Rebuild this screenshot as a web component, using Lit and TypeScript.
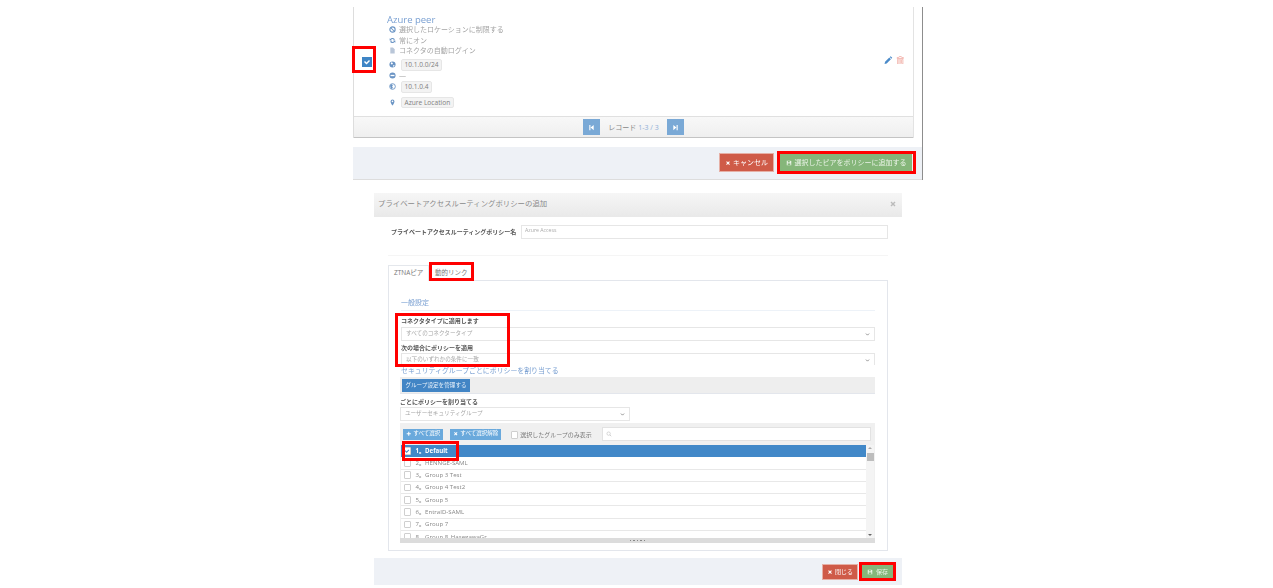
import { LitElement, html, css, svg } from "lit";
import { customElement } from "lit/decorators.js";

const icons: Record<string, unknown> = {
  ban: svg`<circle cx="8" cy="8" r="6" fill="none" stroke="currentColor" stroke-width="2.6"/><path d="M4 4l8 8" stroke="currentColor" stroke-width="2.4"/>`,
  refresh: svg`<path d="M13.5 6A6 6 0 0 0 3 4.5L1.5 3v5h5L4.8 6.2A3.8 3.8 0 0 1 11 6.6zM2.5 10A6 6 0 0 0 13 11.5l1.5 1.500v-5h-5l1.700 1.800A3.800 3.800 0 0 1 5 9.400z" fill="currentColor"/>`,
  file: svg`<path d="M3 1h6l4 4v10H3z" fill="currentColor"/>`,
  globe: svg`<circle cx="8" cy="8" r="7" fill="currentColor"/><path d="M5 3l3 1 1 3-3 1-2-2zM10 9l3 1-2 3-2-1z" fill="#fff"/>`,
  minus: svg`<circle cx="8" cy="8" r="7" fill="currentColor"/><rect x="3.500" y="6.500" width="9" height="3" fill="#fff"/>`,
  globe2: svg`<circle cx="8" cy="8" r="6.500" fill="none" stroke="currentColor" stroke-width="2"/><path d="M2 6l4-4 3 3-2 3 2 3-3 3z" fill="currentColor"/>`,
  marker: svg`<path d="M8 1a4.500 4.500 0 0 0-4.500 4.500C3.500 9 8 15 8 15s4.500-6 4.500-9.500A4.500 4.500 0 0 0 8 1z" fill="currentColor"/><circle cx="8" cy="5.500" r="1.800" fill="#fff"/>`,
  pencil: svg`<path d="M1 15l1-4 8-8 3 3-8 8zM11 2l1.500-1.500 3 3L14 5z" fill="currentColor"/>`,
  trash: svg`<path d="M6 1h4l1 2h3v1.500H2V3h3zM3 6h10v9H3zM5.500 7.500v6M8 7.500v6M10.500 7.500v6" fill="none" stroke="currentColor" stroke-width="1.400"/>`,
  save: svg`<path d="M2 2h10l2 2v10H2z" fill="currentColor"/><rect x="5" y="2.800" width="5" height="3.500" fill="#85b67a"/><rect x="4.500" y="9" width="7" height="4.500" fill="#85b67a"/>`,
  times: svg`<path d="M3 5l2-2 3 3 3-3 2 2-3 3 3 3-2 2-3-3-3 3-2-2 3-3z" fill="currentColor"/>`,
  plus: svg`<path d="M6.500 2h3v4.500H14v3H9.500V14h-3V9.500H2v-3h4.500z" fill="currentColor"/>`,
  first: svg`<path d="M3 2h2.500v12H3zM13 2v12L6 8z" fill="currentColor"/>`,
  last: svg`<path d="M13 2h-2.500v12H13zM3 2v12l7-6z" fill="currentColor"/>`,
  check: svg`<path d="M2 8l2-2 3 3 5-5 2 2-7 7z" fill="currentColor"/>`,
  search: svg`<circle cx="7" cy="7" r="4.500" fill="none" stroke="currentColor" stroke-width="1.500"/><path d="M10.500 10.500L14 14" stroke="currentColor" stroke-width="1.800"/>`,
  chev: svg`<path d="M3 5l5 5 5-5" fill="none" stroke="currentColor" stroke-width="2.500"/>`,
};

const ic = (name: string, cls = "") =>
  html`<svg class="ic ${cls}" viewBox="0 0 16 16" aria-hidden="true">${icons[name]}</svg>`;

const groups = [
  "2。HENNGE-SAML",
  "3。Group 3 Test",
  "4。Group 4 Test2",
  "5。Group 5",
  "6。EntraID-SAML",
  "7。Group 7",
  "8。Group 8_HasegawaGr",
];

@customElement("app-root")
export class AppRoot extends LitElement {
  static styles = css`
    :host {
      display: block;
      width: 1273px;
      height: 588px;
      overflow: hidden;
      background: #fff;
      color: #777;
      font-family: "Open Sans", "Noto Sans CJK JP", sans-serif;
      font-size: 7px;
      line-height: 1;
    }
    * { box-sizing: border-box; }
    .page { filter: blur(0.45px); height: 588px; padding-top: 7px; }
    .ic { width: 1em; height: 1em; display: block; flex: none; }
    .hl { position: absolute; border: 3px solid #f00; pointer-events: none; z-index: 2; }

    /* upper capture */
    .upper { width: 570px; margin-left: 353px; height: 173px; border-right: 1px solid #8d8d8d; }
    .table { width: 561px; height: 131px; border-left: 1px solid #ddd; border-right: 1px solid #e3e3e3; display: flex; flex-direction: column; }
    .peer { height: 109px; display: flex; align-items: center; }
    .pick { width: 33px; padding-left: 7.700px; flex: none; }
    .bigcheck { position: relative; width: 10px; height: 10px; background: #3f85c5; color: #fff; font-size: 8px; display: flex; align-items: center; justify-content: center; }
    .hl-check { left: -9.700px; top: -10.500px; width: 24px; height: 26.700px; }
    .peer-body { flex: 1; display: flex; flex-direction: column; align-self: flex-start; }
    .peer-title { color: #7aa0d2; font-size: 9.500px; height: 11px; margin-top: 6.500px; line-height: 11px; margin-bottom: 0.300px; }
    .pline { display: flex; align-items: center; gap: 3.500px; height: 10.400px; color: #a4a4a4; font-size: 7px; padding-left: 1.500px; white-space: nowrap; }
    .pline .ic { color: #6a94c4; font-size: 7px; }
    .pline.file .ic { color: #b9c6d8; }
    .pline.chip-line { height: 11.500px; gap: 5.500px; }
    .pline.c1 { margin-top: 3.200px; }
    .pline.dash { height: 10px; }
    .pline.c2 { margin-top: 0.500px; }
    .pline.c3 { margin-top: 4px; }
    .chip { background: #f3f3f3; border: 1px solid #e6e6e6; border-radius: 2px; color: #808080; font-size: 6.600px; padding: 0 2.500px; height: 11.500px; line-height: 9.500px; white-space: nowrap; }
    .actions { display: flex; gap: 2.700px; padding-right: 9px; position: relative; top: -1.500px; font-size: 8.500px; }
    .actions .edit { color: #4a8ac9; }
    .actions .del { color: #f0a8a0; }
    .pager { height: 22px; background: linear-gradient(#f8f8f8, #efefef); border-top: 1px solid #e0e0e0; border-bottom: 1px solid #c4c4c4; display: flex; align-items: center; justify-content: center; gap: 8px; font-size: 7px; color: #888; white-space: nowrap; }
    .pager b { font-weight: 400; color: #8fb0d8; }
    .pgbtn { width: 17px; height: 16px; background: #7aa9d6; color: #fff; font-size: 7px; display: flex; align-items: center; justify-content: center; }
    .foot { margin-top: 9px; height: 33px; background: #eef1f6; border-bottom: 1px solid #ddd; display: flex; align-items: center; justify-content: flex-end; gap: 6px; padding-right: 10px; padding-bottom: 1px; }
    .btn { position: relative; display: flex; align-items: center; justify-content: center; gap: 2px; color: #fff; font-size: 7px; white-space: nowrap; }
    .btn .ic { font-size: 6px; }
    .red { background: #cf5b48; border: 1px solid #e6b0a6; }
    .green { background: #85b67a; }
    .cancel { width: 55px; height: 19px; }
    .add { width: 132px; height: 17px; gap: 3px; color: #eaf3e7; }
    .hl-add { left: -3px; top: -3px; width: 139px; height: 23px; }

    /* lower capture */
    .modal { width: 528px; margin: 13px 0 0 374px; height: 392px; display: flex; flex-direction: column; position: relative; }
    .mhead { height: 24px; background: linear-gradient(#f6f6f6, #e9e9e9); display: flex; align-items: center; justify-content: space-between; padding: 0 5px 2px 4px; color: #8a8a8a; font-size: 7.400px; flex: none; }
    .mhead .ic { color: #bbb; font-size: 8px; }
    .mbody { flex: 1; padding: 8px 14px 0 14px; display: flex; flex-direction: column; }
    .namerow { display: flex; align-items: center; height: 14px; }
    .namerow label { width: 133px; padding-left: 3px; font-weight: 700; color: #555; font-size: 6px; white-space: nowrap; flex: none; }
    .input { flex: 1; height: 14px; border: 1px solid #e6e6e6; padding: 0 3px 2px; color: #aaa; font-size: 5.200px; display: flex; align-items: center; }
    .divider { height: 1px; background: #f5f5f5; margin-top: 16px; flex: none; }
    .tabs { display: flex; height: 16px; margin-top: 9px; flex: none; position: relative; z-index: 1; }
    .tab { position: relative; display: flex; align-items: center; height: 16px; color: #777; font-size: 6.500px; border: 1px solid #e4e7ec; border-bottom: 0; background: #fff; white-space: nowrap; }
    .t1 { width: 41px; padding-left: 5px; }
    .t2 { width: 42px; padding-left: 4px; margin-left: 1px; border-color: transparent; }
    .hl-tab { left: -2px; top: -4px; width: 45px; height: 19px; }
    .panel { border: 1px solid #e3e6ec; height: 271px; margin-top: -1px; padding: 0 12px; display: flex; flex-direction: column; }
    .sect { color: #7aa0d2; font-size: 7px; margin-top: 17px; height: 10px; line-height: 10px; flex: none; }
    .rule { height: 1px; background: #edf2f8; margin-top: 2px; flex: none; }
    .general { height: 54px; overflow: hidden; flex: none; }
    .fl { display: block; font-weight: 700; color: #555; font-size: 6px; height: 7px; line-height: 7px; white-space: nowrap; }
    .f1 { margin-top: 7px; }
    .f2 { margin-top: 4px; }
    .select { height: 14px; border: 1px solid #e6e6e6; color: #a8a8a8; font-size: 5.600px; padding: 0 4px; display: flex; align-items: center; justify-content: space-between; background: #fff; }
    .select .ic { color: #777; font-size: 5px; }
    .s1 { margin-top: 2px; }
    .s2 { margin-top: 1px; }
    .sect2 { color: #7aa0d2; font-size: 6.900px; height: 10px; line-height: 10px; flex: none; white-space: nowrap; margin-top: 1px; }
    .gbar { height: 17px; background: #eee; border-bottom: 1px solid #e3e6ec; padding: 2px; flex: none; margin: 1px 0 0 -1px; }
    .gbtn { width: 68px; height: 13px; background: #4285c5; color: #e8f1fa; font-size: 5.600px; display: flex; align-items: center; justify-content: center; white-space: nowrap; }
    .fl2 { font-weight: 700; color: #555; font-size: 6px; height: 7px; line-height: 7px; margin: 5px 0 0 -1px; flex: none; white-space: nowrap; }
    .select.short { width: 230px; margin: 1px 0 0 -1px; flex: none; }
    .picker { margin: 2px 0 0 -1px; flex: none; width: 475px; background: #f0f0f0; position: relative; }
    .phead { height: 22px; display: flex; align-items: center; padding: 0 3px; }
    .mini { height: 11px; background: #6aa9dc; color: #fff; font-size: 5.500px; display: flex; align-items: center; justify-content: center; gap: 2px; white-space: nowrap; }
    .mini .ic { font-size: 5.500px; }
    .m1 { width: 40px; margin-right: 7px; }
    .m2 { width: 51px; margin-right: 9.700px; }
    .only { display: flex; align-items: center; gap: 2px; color: #777; font-size: 6px; white-space: nowrap; width: 91.300px; padding-top: 2px; flex: none; }
    .cb { width: 7.500px; height: 7.500px; border: 1px solid #cfcfcf; background: #fff; flex: none; border-radius: 1px; }
    .search { width: 269.500px; height: 14px; background: #fff; border: 1px solid #e2e2e2; padding: 3px; color: #bbb; font-size: 6px; flex: none; }
    .plist { display: flex; height: 93px; overflow: hidden; padding-left: 1px; }
    .rows { flex: 1; display: flex; flex-direction: column; background: #fff; overflow: hidden; }
    .row { height: 12.300px; flex: none; display: flex; align-items: center; gap: 4.500px; padding-left: 2.500px; border-bottom: 1px solid #e8e8e8; color: #888; font-size: 6.100px; white-space: nowrap; background: #fff; }
    .row.on { background: #4188c8; color: #fff; font-weight: 700; border-bottom: 0; }
    .row.on .cb { display: flex; align-items: center; justify-content: center; color: #4188c8; font-size: 6px; }
    .hl-def { left: 2px; top: 18px; width: 57px; height: 20px; }
    .sbar { width: 8px; background: #f4f4f4; display: flex; flex-direction: column; align-items: center; justify-content: space-between; padding: 2px 0; margin-right: 1px; position: relative; flex: none; }
    .thumb { position: absolute; top: 8px; left: 1px; width: 7px; height: 8px; background: #bdbdbd; }
    .arrow { width: 0; height: 0; border: 2px solid transparent; }
    .arrow.u { border-bottom-color: #aaa; border-top: 0; }
    .arrow.d { border-top-color: #666; border-bottom: 0; }
    .grip { height: 5px; background: #dcdcdc; display: flex; justify-content: center; align-items: center; gap: 2px; }
    .grip i { width: 1.500px; height: 1.500px; background: #888; display: block; }
    .mfoot { height: 27px; background: #eef1f6; display: flex; align-items: center; justify-content: flex-end; gap: 4px; padding-right: 9px; flex: none; font-size: 6px; }
    .mfoot .btn { font-size: 6px; }
    .close { width: 36px; height: 16px; }
    .savebtn { width: 31px; height: 13px; gap: 3px; color: #eaf3e7; }
    .hl-save { left: -3px; top: -3px; width: 37px; height: 19px; }
    .hl-conn { left: 21px; top: 120px; width: 115px; height: 54px; }
  `;

  render() {
    return html`<div class="page">
      <section class="upper">
        <div class="table">
          <div class="peer">
            <div class="pick">
              <span class="bigcheck">${ic("check")}<span class="hl hl-check"></span></span>
            </div>
            <div class="peer-body">
              <div class="peer-title">Azure peer</div>
              <div class="pline">${ic("ban")}<span>選択したロケーションに制限する</span></div>
              <div class="pline">${ic("refresh")}<span>常にオン</span></div>
              <div class="pline file">${ic("file")}<span>コネクタの自動ログイン</span></div>
              <div class="pline chip-line c1">${ic("globe")}<span class="chip">10.1.0.0/24</span></div>
              <div class="pline dash">${ic("minus")}<span>—</span></div>
              <div class="pline chip-line c2">${ic("globe2")}<span class="chip">10.1.0.4</span></div>
              <div class="pline chip-line c3">${ic("marker")}<span class="chip">Azure Location</span></div>
            </div>
            <div class="actions">
              <span class="edit">${ic("pencil")}</span><span class="del">${ic("trash")}</span>
            </div>
          </div>
          <div class="pager">
            <span class="pgbtn">${ic("first")}</span>
            <span>レコード <b>1-3 / 3</b></span>
            <span class="pgbtn">${ic("last")}</span>
          </div>
        </div>
        <div class="foot">
          <span class="btn red cancel">${ic("times")}キャンセル</span>
          <span class="btn green add">${ic("save")}選択したピアをポリシーに追加する<span class="hl hl-add"></span></span>
        </div>
      </section>

      <section class="modal">
        <header class="mhead"><span>プライベートアクセスルーティングポリシーの追加</span>${ic("times")}</header>
        <div class="mbody">
          <div class="namerow">
            <label>プライベートアクセスルーティングポリシー名</label>
            <div class="input">Azure Access</div>
          </div>
          <div class="divider"></div>
          <div class="tabs">
            <span class="tab t1">ZTNAピア</span>
            <span class="tab t2">動的リンク<span class="hl hl-tab"></span></span>
          </div>
          <div class="panel">
            <div class="sect">一般設定</div>
            <div class="rule"></div>
            <div class="general">
              <span class="fl f1">コネクタタイプに適用します</span>
              <div class="select s1"><span>すべてのコネクタータイプ</span>${ic("chev")}</div>
              <span class="fl f2">次の場合にポリシーを適用</span>
              <div class="select s2"><span>以下のいずれかの条件に一致</span>${ic("chev")}</div>
            </div>
            <div class="sect2">セキュリティグループごとにポリシーを割り当てる</div>
            <div class="gbar"><div class="gbtn">グループ設定を管理する</div></div>
            <div class="fl2">ごとにポリシーを割り当てる</div>
            <div class="select short"><span>ユーザーセキュリティグループ</span>${ic("chev")}</div>
            <div class="picker">
              <div class="phead">
                <span class="mini m1">${ic("plus")}すべて選択</span>
                <span class="mini m2">${ic("times")}すべて選択解除</span>
                <span class="only"><span class="cb"></span>選択したグループのみ表示</span>
                <div class="search">${ic("search")}</div>
              </div>
              <div class="plist">
                <div class="rows">
                  <div class="row on"><span class="cb">${ic("check")}</span>1。Default</div>
                  ${groups.map((g) => html`<div class="row"><span class="cb"></span>${g}</div>`)}
                </div>
                <div class="sbar"><span class="arrow u"></span><span class="thumb"></span><span class="arrow d"></span></div>
              </div>
              <div class="grip"><i></i><i></i><i></i><i></i><i></i></div>
              <span class="hl hl-def"></span>
            </div>
          </div>
        </div>
        <footer class="mfoot">
          <span class="btn red close">${ic("times")}閉じる</span>
          <span class="btn green savebtn">${ic("save")}保存<span class="hl hl-save"></span></span>
        </footer>
        <span class="hl hl-conn"></span>
      </section>
    </div>`;
  }
}
